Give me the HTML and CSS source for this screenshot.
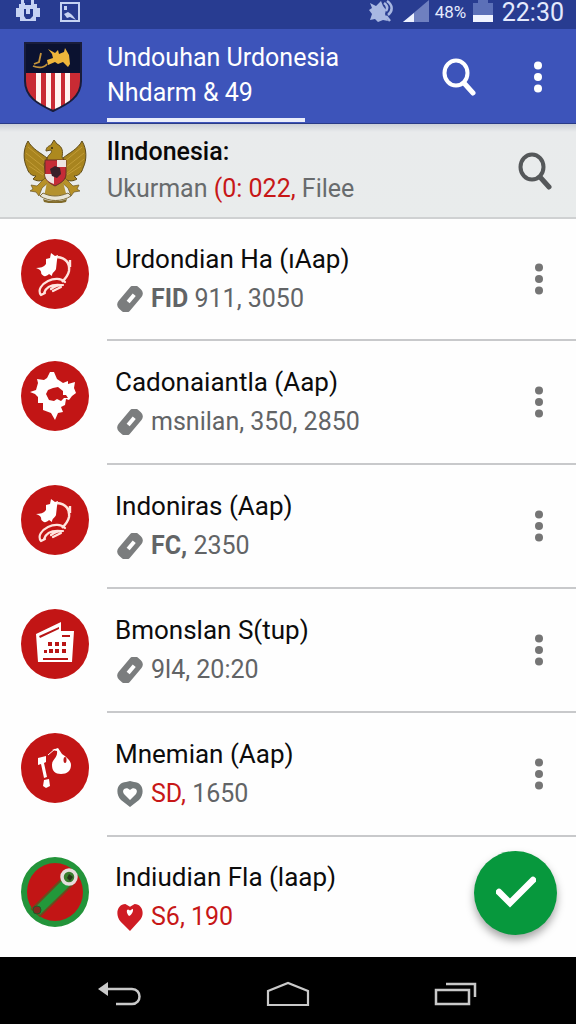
FILE: index.html
```html
<!DOCTYPE html>
<html lang="id">
<head>
<meta charset="utf-8">
<meta name="viewport" content="width=device-width, initial-scale=1">
<title>Undouhan Urdonesia</title>
<link rel="stylesheet" href="styles.css">
</head>
<body>
<svg class="sprite" aria-hidden="true">
  <symbol id="search" viewBox="0 0 36 38"><ellipse cx="14" cy="15" rx="11.500" ry="12.500" fill="none" stroke="currentColor" stroke-width="4"/><path d="M22 25l9 10" stroke="currentColor" stroke-width="5" stroke-linecap="round"/></symbol>
  <symbol id="dots" viewBox="0 0 10 32"><circle cx="5" cy="4.500" r="4"/><circle cx="5" cy="16" r="4"/><circle cx="5" cy="27.500" r="4"/></symbol>
  <symbol id="clip" viewBox="0 0 26 26"><g transform="rotate(40 13 13)"><rect x="5.500" y="-1.500" width="15" height="29" rx="5.500" fill="#7b7d7e"/><rect x="11.500" y="7" width="4" height="9.500" fill="#fff"/></g></symbol>
  <symbol id="bird" viewBox="0 0 68 70"><path d="M15 29c4 0 8-1 10-4l0-5 4-1 1-5 4 3 3-1-1 5-1 9c-1 3-4 3-4 7l-3-2c-3 3-6 3-8-1 1-2-2-4-5-5z" fill="#fff"/><path d="M36 18c9 1 13 6 12 14-1 5-4 8-7 11M49 21v7" fill="none" stroke="#ffe5df" stroke-width="2.400"/><path d="M20 56c-4-5 1-11 7-14s13-3 17 1M23 54c2-6 7-9 17-8M30 50c4-3 7-4 12-4M32 52l8-4M20 56l4-2" fill="none" stroke="#ffe5df" stroke-width="2.200" stroke-linecap="round"/></symbol>
</svg>

<div class="screen">
  <div class="status">
    <svg class="status-bot" viewBox="0 0 24 22"><path fill="#c6d3f3" d="M5 0h3v3h7V0h3v4h3v4h3v9h-4v4H4v-4H0V8h3V4h2z"/><path fill="#24398c" d="M9 2h6v3H9zM8 9h2v5h4V9h3v7l-3 3h-4l-2-3z"/><path fill="#c6d3f3" d="M11 11h2v2h-2z"/></svg>
    <svg class="status-pic" viewBox="0 0 20 20"><path fill="none" stroke="#c6d3f3" stroke-width="2" d="M1 1h18v18H1z"/><path fill="#c6d3f3" d="M4 12l4-2 3 2 2 2 3 4-6-3-3 1zM4 4h3v4H4z"/></svg>
    <span class="spacer"></span>
    <svg class="status-mute" viewBox="0 0 24 24"><path fill="#a9b8e2" d="M1 3l6 3 5-5 2 5 3 4-1 4 3 7-5-1-5 2-3-3-5 1 2-6-3-4 3-2z"/><path fill="none" stroke="#a9b8e2" stroke-width="2.500" d="M18 1c6 4 6 10 1 14M15 3c3 2 4 5 2 8M17 16l4 5"/></svg>
    <svg class="status-signal" viewBox="0 0 26 22"><path fill="#6f80c0" d="M26 0v22H0z"/><path fill="#eef2ff" d="M11 13v9H0z"/></svg>
    <span class="status-percent">48%</span>
    <svg class="status-battery" viewBox="0 0 20 22"><path fill="#5c70b8" d="M5 0h10v3h5v13H0V3h5z"/><path fill="#f0f3ff" d="M0 15h20v7H0z"/></svg>
    <time class="status-time">22:30</time>
  </div>

  <header class="appbar">
    <svg class="shield" viewBox="0 0 60 72"><defs><clipPath id="crest"><path d="M2 2h56v38c0 16-13 23-28 30C15 63 2 56 2 40z"/></clipPath></defs><g clip-path="url(#crest)"><path fill="#fff5f1" d="M0 0h60v72H0z"/><path fill="#c92b34" d="M0 30h13v42H0zM18 30h5v42h-5zM28 30h4v42h-4zM38 30h4v42h-4zM47 30h13v42H47z"/><path fill="#0b1230" d="M0 0h60v32H0z"/></g><path fill="none" stroke="#191d3b" stroke-width="2" d="M2 2h56v38c0 16-13 23-28 30C15 63 2 56 2 40z"/><path d="M24 19l6-2-1-4-4-5 7 4 3-3 1 4 5-2 1-4 4 7 1 9-2 3-5-5-5 2-3-2-7 3z" fill="#eeb63b"/><path d="M11 23l5-2 2-9m-8 13c5 2 11 2 14-2" fill="none" stroke="#c2923b" stroke-width="1.800"/></svg>
    <div class="appbar-text">
      <h1 class="appbar-title">Undouhan Urdonesia<br>Nhdarm &amp; 49</h1>
      <div class="tab-line"></div>
    </div>
    <button class="icon-button" type="button" aria-label="Cari"><svg class="search"><use href="#search"/></svg></button>
    <button class="icon-button menu-button" type="button" aria-label="Menu"><svg class="dots"><use href="#dots"/></svg></button>
  </header>

  <section class="subheader">
    <svg class="eagle" viewBox="0 0 64 64">
      <path d="M5 2c4 8 13 12 19 17l-2 21c-4 3-9 2-12 0l3-3c-5 0-8-4-9-8-4-8-4-19 1-27zM59 2c5 8 5 19 1 27-1 4-4 8-9 8l3 3c-3 2-8 3-12 0l-2-21C46 14 55 10 59 2z" fill="#a8841f" stroke="#5e4b19"/>
      <path d="M5 8l18 15M3 14l19 15M3 20l18 15M6 27l14 9M59 8L41 23M61 14L42 29M61 20L43 35M58 27l-14 9" stroke="#c29c36" stroke-width="1"/>
      <path d="M24 21c0-6 6-6 4-10l-5 1c0-4 3-5 5-6l3-5 3 4c6 3 6 8 5 13l3 5-4 26-6 5-7-5-4-24z" fill="#ad891f" stroke="#654f1d"/>
      <path d="M22 39l-8 8-6-1 2 4-3 2 6 1 3 4 3-8 8-7zM42 39l8 8 6-1-2 4 3 2-6 1-3 4-3-8-8-7z" fill="#b79128" stroke="#6b5622" stroke-width=".7"/>
      <path d="M24 43l-3 15 11 5 12-5-4-15z" fill="#b4922f"/>
      <path d="M20 54c8 4 16 4 25 0l3 3c-9 6-22 6-31 0z" fill="#e8e5d8" stroke="#806d39"/>
      <path d="M20 60c8 3 16 3 24 0l-1 3c-7 2-15 2-22 0z" fill="#806a2a"/>
      <path d="M22 21h21v14c0 6-5 9-11 12-6-3-10-6-10-12z" fill="#c52c37" stroke="#663129"/><path d="M34 21h9v7h-9zM22 35h9v10c-5-2-9-4-9-10z" fill="#eee4e2"/><path d="M27 30l5-3 5 2 1 6-4 4-5-2z" fill="#381f29"/><circle cx="29" cy="9" r="1" fill="#342b13"/>
    </svg>
    <div class="subheader-text">
      <h2 class="subheader-title">lIndonesia:</h2>
      <p class="subheader-meta">Ukurman <span class="red">(0: 022,</span> Filee</p>
    </div>
    <button class="icon-button sub-search" type="button" aria-label="Cari Indonesia"><svg class="search"><use href="#search"/></svg></button>
  </section>

  <main class="content">
    <ul class="list">
      <li class="row">
        <span class="badge"><svg class="badge-art"><use href="#bird"/></svg></span>
        <div class="row-body"><div class="row-text"><h3 class="title">Urdondian Ha (ıAap)</h3><p class="meta"><svg class="meta-icon"><use href="#clip"/></svg><span><b>FID</b> 911, 3050</span></p></div><button class="icon-button row-menu" type="button" aria-label="Opsi Urdondian"><svg class="dots"><use href="#dots"/></svg></button></div>
      </li>
      <li class="row">
        <span class="badge"><svg class="badge-art" viewBox="0 0 68 70"><path fill="#fff" fill-rule="evenodd" d="M33 11l3 7 6 4 5-2 0 3 7-2-1 6 2 5-4 3-3 4-3-1-1 6-4 2 2 5-5 1-3 7-4-7-8-3 0-7-5 0 0-6-3-3-5-2 6-2 2-7-1-4 7 1 3-2 3-6zM27 29l-2 4 3 6 5 1 3-2 4 2 3-3 4 0-2-3-3 0 0-4-5-4-5 1z"/></svg></span>
        <div class="row-body"><div class="row-text"><h3 class="title">Cadonaiantla (Aap)</h3><p class="meta"><svg class="meta-icon"><use href="#clip"/></svg><span>msnilan, 350, 2850</span></p></div><button class="icon-button row-menu" type="button" aria-label="Opsi Cadonaiantla"><svg class="dots"><use href="#dots"/></svg></button></div>
      </li>
      <li class="row">
        <span class="badge"><svg class="badge-art"><use href="#bird"/></svg></span>
        <div class="row-body"><div class="row-text"><h3 class="title">Indoniras (Aap)</h3><p class="meta"><svg class="meta-icon"><use href="#clip"/></svg><span><b>FC,</b> 2350</span></p></div><button class="icon-button row-menu" type="button" aria-label="Opsi Indoniras"><svg class="dots"><use href="#dots"/></svg></button></div>
      </li>
      <li class="row">
        <span class="badge"><svg class="badge-art" viewBox="0 0 68 70"><path fill="#fff" d="M15 25l25-12v9h13l-2 31H17z"/><g fill="#b91515"><path d="M18 27l20-9v2l-19 9zM41 26h8v2h-8zM22 49h25v2H22z"/><path d="M27 33h4v4h-4zM34 33h4v4h-4zM41 33h4v4h-4zM23 41h3v3h-3zM28 40h4v4h-4zM34 40h4v4h-4zM41 40h4v4h-4z"/></g></svg></span>
        <div class="row-body"><div class="row-text"><h3 class="title">Bmonslan S(tup)</h3><p class="meta"><svg class="meta-icon"><use href="#clip"/></svg><span>9l4, 20:20</span></p></div><button class="icon-button row-menu" type="button" aria-label="Opsi Bmonslan"><svg class="dots"><use href="#dots"/></svg></button></div>
      </li>
      <li class="row">
        <span class="badge"><svg class="badge-art" viewBox="0 0 68 70"><path fill="#fff" d="M17 25l8-2v6l-2 1 3 14-3 1-3-14-3 1zM23 47l5-1 1 7-4 2-3-2zM31 17l6-2 4 6c4 3 9 6 9 11 0 6-4 9-10 9s-9-3-9-9c0-6 6-7 5-14z"/><path fill="none" stroke="#fff" d="M27 22l7-6"/><ellipse cx="44" cy="27" rx="1.500" ry="3" fill="#ba1717"/></svg></span>
        <div class="row-body"><div class="row-text"><h3 class="title">Mnemian (Aap)</h3><p class="meta"><svg class="meta-icon" viewBox="0 0 26 26"><path d="M13 26L4 19C-3 11 1 1 9 1l4-1 4 1c8 0 12 10 5 18z" fill="#747a7b"/><path d="M13 19l-6-6c-3-4 2-8 6-4 4-4 9 0 6 4z" fill="#fff"/></svg><span><span class="red">SD,</span> 1650</span></p></div><button class="icon-button row-menu" type="button" aria-label="Opsi Mnemian"><svg class="dots"><use href="#dots"/></svg></button></div>
      </li>
      <li class="row">
        <span class="badge badge-green"><svg class="badge-art" viewBox="0 0 68 70"><path d="M11 52l32-32 8 8-32 31z" fill="#22983a" stroke="#70481d" stroke-width="2"/><circle cx="16" cy="53" r="4" fill="#822b20" stroke="#215a27"/><circle cx="48" cy="20" r="7" fill="#397c2e" stroke="#e5dddd" stroke-width="3.500"/><path d="M48 17l4 3-3 4-3-3z" fill="#24351b"/></svg></span>
        <div class="row-body"><div class="row-text"><h3 class="title">Indiudian Fla (laap)</h3><p class="meta red"><svg class="meta-icon heart" viewBox="0 0 28 30"><path d="M14 30L4 20C-3 12 1 1 9 1l5 3 5-3c8 0 12 11 5 18z" fill="#cf1c24"/><path d="M13 14c-3-3-3-7-1-7l2 1 3-2c1 3-1 6-4 8z" fill="#fff"/></svg><span>S6, 190</span></p></div></div>
      </li>
    </ul>
    <button class="fab" type="button" aria-label="Selesai"><svg class="check" viewBox="0 0 40 34"><path d="M3 16l11 11L37 4" fill="none" stroke="#fff" stroke-width="6.500" stroke-linejoin="miter" stroke-linecap="round"/></svg></button>
  </main>

  <nav class="navbar">
    <button class="nav-button" type="button" aria-label="Kembali"><svg class="nav-icon" viewBox="0 0 44 26"><path d="M9 8h25c10 0 10 15 0 15H18" fill="none" stroke="#c9c9c9" stroke-width="2.500"/><path d="M0 8l10-7v14z" fill="#c9c9c9"/></svg></button>
    <button class="nav-button" type="button" aria-label="Beranda"><svg class="nav-icon" viewBox="0 0 44 26"><path d="M2 24V10l20-8 20 8v14z" fill="none" stroke="#c9c9c9" stroke-width="2.200"/></svg></button>
    <button class="nav-button" type="button" aria-label="Terbaru"><svg class="nav-icon" viewBox="0 0 44 26"><path d="M2 9h33v14H2zM12 3h29v13" fill="none" stroke="#c9c9c9" stroke-width="2.500"/></svg></button>
  </nav>
</div>
</body>
</html>
```
FILE: styles.css
```css
* { box-sizing: border-box; }
body, h1, h2, h3, p, ul { margin: 0; padding: 0; }
body { font-family: Roboto, "Liberation Sans", sans-serif; background: #fefefe; }
svg { display: block; flex: none; }
.sprite { position: absolute; width: 0; height: 0; }
.screen { display: flex; flex-direction: column; min-height: 100vh; }
.spacer { flex: 1; }
.red { color: #c71717; }

.status { display: flex; height: 29px; padding: 0 12px 0 16px; background: #283c91; color: #e4eafd; }
.status-bot { width: 24px; height: 22px; }
.status-pic { width: 20px; height: 20px; margin: 2px 0 0 20px; }
.status-mute { width: 24px; height: 24px; margin-right: 10px; }
.status-signal { width: 26px; height: 22px; margin-right: 6px; }
.status-percent { width: 38px; font-size: 17px; line-height: 25px; }
.status-battery { width: 20px; height: 22px; margin-right: 9px; }
.status-time { font-size: 25px; line-height: 26px; }

.appbar { display: flex; height: 95px; padding: 0 16px 0 23px; background: #3d54ba; color: #fff; border-bottom: 1px solid #293b87; }
.shield { width: 60px; height: 72px; margin-top: 12px; }
.appbar-text { display: flex; flex: 1; flex-direction: column; justify-content: space-between; padding: 11px 0 1px 24px; }
.appbar-title { font-size: 25px; font-weight: 400; line-height: 35px; white-space: nowrap; }
.tab-line { width: 198px; height: 4px; background: #e9edfb; }
.icon-button { display: grid; place-items: center; flex: none; width: 48px; height: 48px; padding: 0; border: 0; background: none; color: inherit; }
.appbar .icon-button { margin-top: 24px; }
.menu-button { margin-left: 32px; }
.search { width: 36px; height: 38px; }
.dots { width: 10px; height: 32px; fill: currentColor; }
.appbar .menu-button { width: 44px; }

.subheader { display: flex; align-items: center; height: 95px; padding: 0 16px 0 23px; background: linear-gradient(#cbd0d7, #e9ebec 8px, #e9ecec); border-bottom: 2px solid #cfd1d2; }
.eagle { width: 64px; height: 64px; }
.subheader-text { flex: 1; padding-left: 20px; white-space: nowrap; }
.subheader-title { color: #090909; font-size: 25px; font-weight: 500; line-height: 36px; }
.subheader-meta { color: #686b6d; font-size: 25px; line-height: 38px; }
.sub-search { color: #55585a; }

.content { display: flex; flex: 1; flex-direction: column; position: relative; }
.list { list-style: none; }
.row { display: flex; height: 124px; padding-left: 21px; }
.row:first-child { height: 122px; }
.row:last-child { height: 120px; }
.badge { display: block; flex: none; width: 68px; height: 70px; margin: 20px 18px 0 0; border-radius: 50%; background: #c21515; }
.badge-green { border: 6px solid #23943a; }
.badge-green .badge-art { margin: -6px; }
.badge-art { width: 68px; height: 70px; }
.row-body { display: flex; flex: 1; align-items: center; min-width: 0; padding: 0 12px 0 8px; border-bottom: 2px solid #c8c9cb; }
.row:last-child .row-body { border-bottom: 0; }
.row-text { flex: 1; white-space: nowrap; }
.title { color: #0c0c0c; font-size: 26px; font-weight: 400; line-height: 40px; }
.meta { display: flex; gap: 8px; align-items: center; padding-left: 2px; color: #626466; font-size: 25px; line-height: 40px; }
.meta.red { color: #c71717; }
.meta-icon { width: 26px; height: 26px; }
.heart { height: 30px; }
.row-menu { width: 50px; color: #757575; }

.fab { display: grid; place-items: center; position: absolute; right: 19px; bottom: 22px; width: 83px; height: 84px; padding: 0; border: 0; border-radius: 50%; background: #07983d; box-shadow: 0 5px 9px rgba(0, 0, 0, .35); }
.check { width: 40px; height: 34px; }

.navbar { display: flex; align-items: center; height: 67px; padding: 6px 36px 0; background: #000; }
.nav-button { display: grid; flex: 1; place-items: center; padding: 0; border: 0; background: none; }
.nav-icon { width: 44px; height: 26px; }
```
